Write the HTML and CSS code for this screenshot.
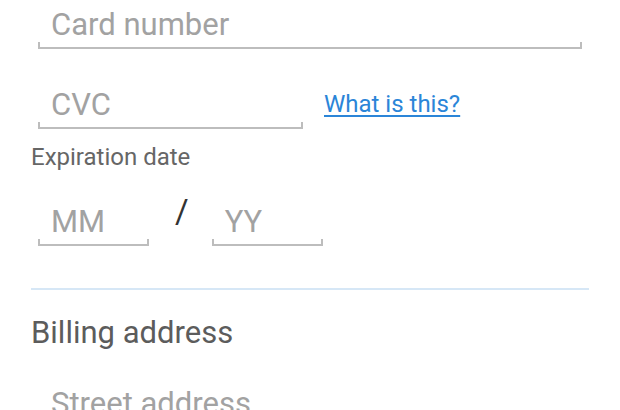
FILE: index.html
```html
<!DOCTYPE html>
<html lang="en">
<head>
<meta charset="utf-8">
<title>Payment form</title>
<link rel="stylesheet" href="styles.css">
</head>
<body>
<main class="form">
  <div class="field field-wide field-card"><span class="hint">Card number</span></div>
  <div class="row row-cvc">
    <div class="field field-cvc"><span class="hint">CVC</span></div>
    <a class="help" href="#">What is this?</a>
  </div>
  <div class="label">Expiration date</div>
  <div class="row row-exp">
    <div class="field field-short"><span class="hint">MM</span></div>
    <span class="slash">/</span>
    <div class="field field-short"><span class="hint">YY</span></div>
  </div>
  <div class="divider"></div>
  <h2 class="section">Billing address</h2>
  <div class="field field-wide field-street"><span class="hint">Street address</span></div>
</main>
</body>
</html>
```
FILE: styles.css
```css
html, body {
  margin: 0;
  padding: 0;
  background: #ffffff;
  overflow: hidden;
}

body {
  font-family: Roboto, "Liberation Sans", sans-serif;
  width: 620px;
  height: 410px;
}

.form {
  display: flex;
  flex-direction: column;
  align-items: flex-start;
  padding: 9px 31px 0 31px;
}

.field {
  position: relative;
  box-sizing: border-box;
  margin-left: 7px;
  padding: 0 0 7px 13px;
  border-bottom: 2px solid #bdbdbd;
  font-size: 31px;
  line-height: 31px;
  height: 40px;
}

.field::before,
.field::after {
  content: "";
  position: absolute;
  bottom: -2px;
  width: 2px;
  height: 7px;
  background: #bdbdbd;
}

.field::before { left: 0; }
.field::after { right: 0; }

.hint {
  color: #a2a2a2;
  white-space: nowrap;
}

.field-wide {
  width: 544px;
}

.row {
  display: flex;
  align-items: flex-start;
}

.row-cvc {
  margin-top: 40px;
}

.field-cvc {
  width: 265px;
}

.help {
  margin-left: 21px;
  margin-top: 3px;
  font-size: 24px;
  line-height: 24px;
  color: #2b85d8;
  text-decoration: underline;
  text-underline-offset: 3px;
}

.label {
  margin-top: 16px;
  font-size: 24px;
  line-height: 24px;
  color: #666666;
}

.row-exp {
  margin-top: 37px;
}

.field-short {
  width: 111px;
}

.slash {
  margin: -11px 23px 0 26px;
  font-size: 33px;
  line-height: 33px;
  color: #333333;
}

.row-exp .field-short + .slash + .field-short {
  margin-left: 0;
}

.divider {
  align-self: stretch;
  margin-top: 42px;
  height: 2px;
  background: #d6e7f6;
}

.section {
  margin: 27px 0 0 0;
  font-size: 31px;
  line-height: 31px;
  font-weight: 400;
  color: #5c5c5c;
}

.field-street {
  margin-top: 40px;
}
```
